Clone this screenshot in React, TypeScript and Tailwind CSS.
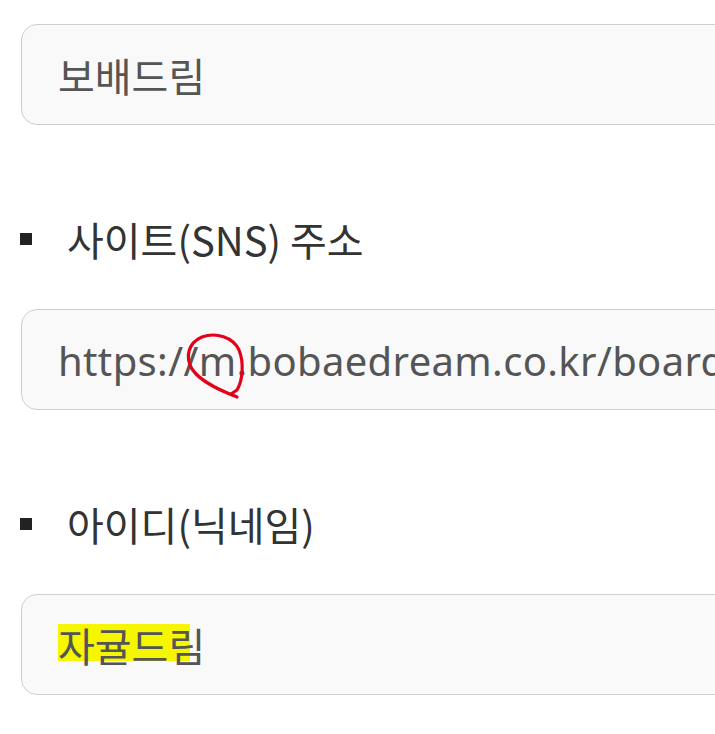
const font = { fontFamily: '"Noto Sans CJK KR", "Noto Sans", sans-serif' }
const latin = { fontFamily: '"Noto Sans", "Noto Sans CJK KR", sans-serif' }

function Field({ children }: { children: React.ReactNode }) {
  return (
    <div className="flex h-[101px] w-[760px] items-center rounded-[16px] border-[1.5px] border-[#cfcfcf] bg-[#f9f9f9] pl-[36px]">
      <div className="whitespace-nowrap text-[40px] leading-none text-[#555]">{children}</div>
    </div>
  )
}

function Label({ text }: { text: string }) {
  return (
    <div className="mt-[89px] mb-[45px] flex h-[50px] items-center">
      <span className="ml-[-1px] mr-[35px] h-[12px] w-[12px] bg-[#222]" />
      <span className="whitespace-nowrap text-[40px] leading-none text-[#333]">{text}</span>
    </div>
  )
}

export default function App() {
  return (
    <div className="relative h-[734px] w-[715px] overflow-hidden bg-white pl-[21px] pt-[24px]" style={font}>
      <Field>보배드림</Field>

      <Label text="사이트(SNS) 주소" />
      <Field>
        <span className="tracking-[0.35px]" style={latin}>
          https://m.bobaedream.co.kr/board/bbs_view
        </span>
      </Field>

      <Label text="아이디(닉네임)" />
      <Field>
        <span className="relative inline-block">
          <span className="absolute left-[0px] top-[-1px] h-[37px] w-[132px] bg-[#f6f600]" />
          <span className="relative">자귤드림</span>
        </span>
      </Field>

      <svg className="pointer-events-none absolute left-0 top-0" width="715" height="734">
        <path
          d="M237 397 C227 393 202 384 192 369 C185 357 188 343 202 337 C216 332 233 337 239 350 C244 362 243 380 237 390 L231 394"
          fill="none"
          stroke="#e5001a"
          strokeWidth="3.2"
          strokeLinecap="round"
          strokeLinejoin="round"
        />
      </svg>
    </div>
  )
}
